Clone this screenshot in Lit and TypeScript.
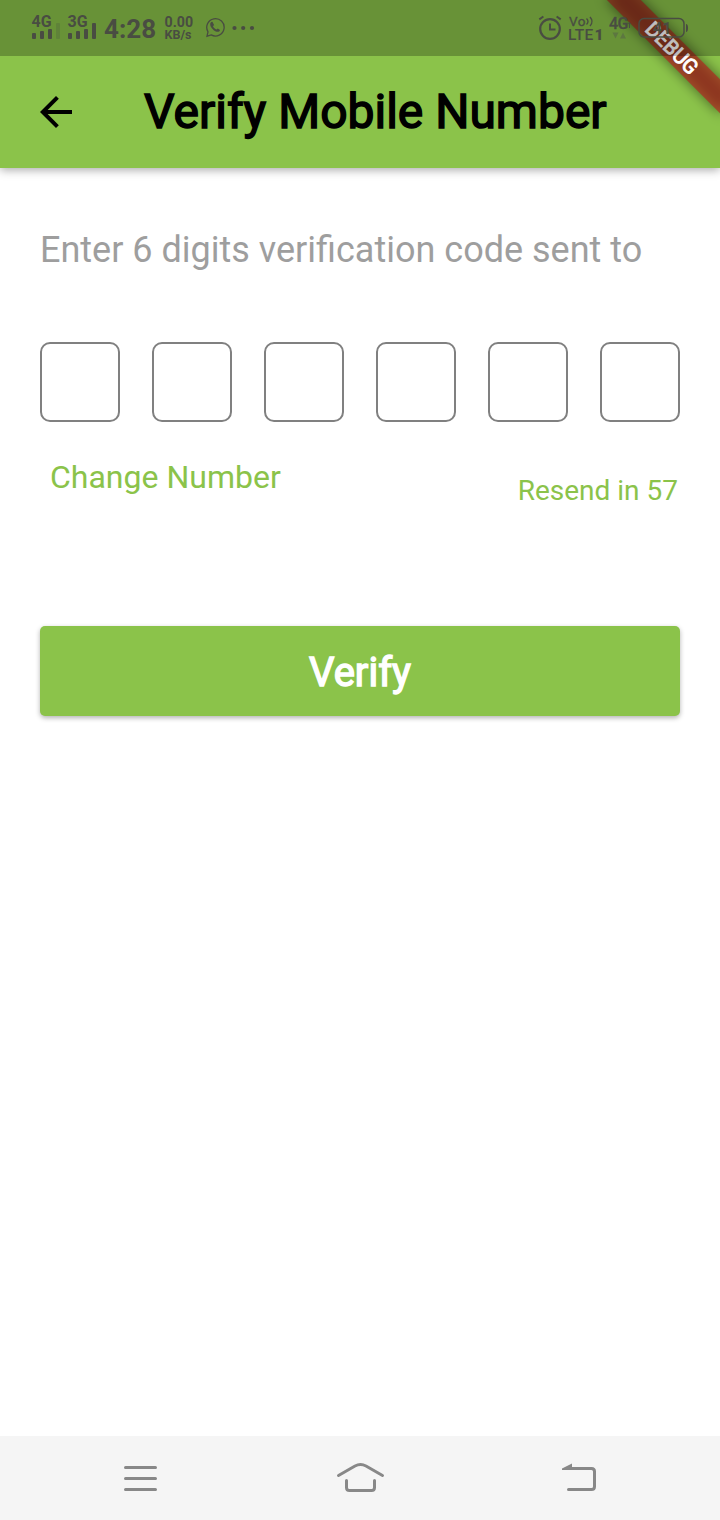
import { LitElement, html, css } from "lit";
import { customElement, state } from "lit/decorators.js";

@customElement("status-bar")
class StatusBar extends LitElement {
  static styles = css`
    :host { display: flex; justify-content: space-between; height: 56px; box-sizing: border-box;
      background: rgba(0, 0, 0, 0.25); color: #494c42; font-weight: 700; line-height: 1; }
    .side { display: flex; align-items: flex-start; }
    .left { padding-left: 31px; }
    .right { padding-right: 31px; }
    svg { display: block; fill: #494c42; }
    .signal { width: 36px; padding-top: 14px; }
    .signal svg { overflow: visible; }
    .signal .tag { padding-left: 0.5px; }
    .tag { font-size: 16px; height: 15px; line-height: 15px; }
    .time { font-size: 26px; width: 60px; padding: 16px 0 0 1px; }
    .rate { width: 40px; padding: 16px 0 0 0.5px; font-size: 14.2px; line-height: 13px; white-space: nowrap; }
    .unit { font-size: 12.5px; line-height: 12px; }
    .chat { padding-top: 17px; width: 27.5px; }
    .dots { padding-top: 25px; }
    .alarm { padding-top: 15px; width: 31px; }
    .volte { width: 40px; padding-top: 15px; font-size: 13.5px; line-height: 13px; white-space: nowrap; }
    .vo { font-weight: 400; display: flex; letter-spacing: 0.4px; -webkit-text-stroke: 0.3px #494c42; }
    .lte { font-size: 15.5px; line-height: 14px; letter-spacing: 0.3px; font-weight: 500; margin-left: -1px; }
    .lte b { font-weight: 900; margin-left: 1px; }
    .net { padding-top: 16px; width: 29px; }
    .net .tag { letter-spacing: -0.6px; display: flex; font-weight: 500; -webkit-text-stroke: 0.3px #494c42; }
    .battery { padding-top: 17px; }
  `;
  render() {
    return html`
      <div class="side left">
        <div class="signal"><div class="tag">4G</div>
          <svg width="30" height="17" viewBox="0 0 30 17"><rect x="1" y="4" width="4" height="6" rx="1"/><rect x="9" y="2" width="4" height="8" rx="1"/><rect x="17" y="0" width="4" height="10" rx="1"/><rect fill="#5f8239" x="25" y="-6" width="4" height="16" rx="1"/></svg>
        </div>
        <div class="signal"><div class="tag">3G</div>
          <svg width="30" height="17" viewBox="0 0 30 17"><rect x="1" y="4" width="4" height="6" rx="1"/><rect x="9" y="2" width="4" height="8" rx="1"/><rect x="17" y="0" width="4" height="10" rx="1"/><rect x="25" y="-6" width="4" height="16" rx="1"/></svg>
        </div>
        <div class="time">4:28</div>
        <div class="rate">0.00<div class="unit">KB/s</div></div>
        <div class="chat"><svg width="20" height="21" viewBox="0 0 20 21"><path fill="none" stroke="#494c42" stroke-width="1.3" d="M2 19.2 3 14.8A8.7 8.7 0 1 1 6.2 17.9Z"/><path d="M6.1 5.1 7.4 4.8 9.1 8 8 9.3C8.8 11 10 12 11.5 12.5L12.8 11.4 15 13C14.7 15.4 11.5 15.4 9 13.5 6.5 11.6 3.7 7.5 6.1 5.1Z"/></svg></div>
        <div class="dots"><svg width="23" height="6" viewBox="0 0 23 6"><circle cx="2.500" cy="3" r="2.100"/><circle cx="11.200" cy="3" r="2.100"/><circle cx="20" cy="3" r="2.100"/></svg></div>
      </div>
      <div class="side right">
        <div class="alarm"><svg width="24" height="26" viewBox="0 0 24 26"><g fill="none" stroke="#494c42"><circle cx="12" cy="14" r="9.800" stroke-width="2.200"/><path stroke-width="2" d="M12 8.500v6h5.500M1.300 4.400 5.400 1.500M18.600 1.500l4.100 2.900"/></g></svg></div>
        <div class="volte"><div class="vo">Vo<svg width="10" height="12" viewBox="0 0 10 12"><path fill="none" stroke="#494c42" stroke-width="1.400" d="M.5 3.500q3 3 0 6M4 2q4 4.500 0 9"/></svg></div><div class="lte">LTE<b>1</b></div></div>
        <div class="net"><div class="tag">4G<svg width="4" height="15" viewBox="0 0 4 15"><path d="M0 8 1.500 6 3 8H2v4H1V8z"/></svg></div><svg width="20" height="9" viewBox="0 0 20 9"><path fill="#5d7740" d="M3.500 1.500h6L6.500 7.500ZM11 7.500h6L14 1.500Z"/></svg></div>
        <div class="battery"><svg width="51" height="22" viewBox="0 0 51 22"><rect x="1" y="1.500" width="45" height="18.500" rx="5" fill="none" stroke="#494c42" stroke-width="1.500"/><path d="M48 7q2 0 2 4t-2 4z"/><text x="15" y="16.500" font-size="16">41</text></svg></div>
      </div>`;
  }
}

@customElement("debug-banner")
class DebugBanner extends LitElement {
  static styles = css`
    :host { position: absolute; top: 0; right: 0; z-index: 1; }
    svg { display: block; }
    text { font: 400 20.4px Roboto, sans-serif; stroke: #fff; stroke-width: 0.9px; }
  `;
  render() {
    return html`<svg width="160" height="160" viewBox="0 0 160 160">
      <defs><filter id="soft" x="-30%" y="-200%" width="160%" height="500%"><feGaussianBlur stdDeviation="6.500"/></filter></defs>
      <g transform="translate(160 0) rotate(45)">
        <rect x="-80" y="56" width="160" height="24" fill="#000" fill-opacity=".5" filter="url(#soft)"/>
        <rect x="-80" y="56" width="160" height="24" fill="#b71c1c" fill-opacity=".63"/>
        <text x="0" y="75" text-anchor="middle" fill="#fff">DEBUG</text>
      </g></svg>`;
  }
}

@customElement("app-root")
class AppRoot extends LitElement {
  @state() private seconds = 57;
  @state() private digits = ["", "", "", "", "", ""];

  static styles = css`
    :host { display: flex; flex-direction: column; position: relative; height: 1520px; width: 720px;
      overflow: hidden; background: #fff; font-family: Roboto, sans-serif; }
    .top { background: #8bc34a; box-shadow: 0 2px 9px rgba(0, 0, 0, 0.34); }
    status-bar { position: relative; z-index: 2; }
    header { display: flex; align-items: center; height: 112px; padding-left: 32px; }
    header svg { display: block; }
    h1 { margin: 0 0 0 64px; font-size: 48px; line-height: 56px; font-weight: 400; color: #000;
      -webkit-text-stroke: 1.5px #000; white-space: nowrap; }
    main { flex: 1; display: flex; flex-direction: column; padding: 61px 40px 0; }
    .hint { margin: 0; font-size: 36px; line-height: 42px; color: #9e9e9e; white-space: nowrap; }
    .code { display: flex; justify-content: space-between; margin-top: 71px; }
    .digit { box-sizing: border-box; width: 80px; height: 80px; border: 2px solid #808080; border-radius: 10px;
      display: grid; place-items: center; font-size: 36px; }
    .actions { display: flex; justify-content: space-between; margin-top: 36px; padding: 0 2px 0 10px; color: #8bc34a; }
    .change { font-size: 32px; line-height: 38px; }
    .resend { font-size: 28px; line-height: 34px; padding-top: 16px; }
    .verify { margin: 118px 0 0; height: 90px; padding: 3px 0 0; border: 0; border-radius: 5px; background: #8bc34a; color: #fff;
      font: 400 40px/46px Roboto, sans-serif; -webkit-text-stroke: 1.4px #fff;
      box-shadow: 0 2px 5px rgba(0, 0, 0, 0.3); }
    nav { display: flex; height: 84px; background: #f5f5f5; }
    nav svg { display: block; }
  `;

  render() {
    return html`
      <div class="top">
        <status-bar></status-bar>
        <header>
          <svg width="48" height="48" viewBox="0 0 24 24"><path d="M20 11H7.830l5.590-5.590L12 4l-8 8 8 8 1.410-1.410L7.830 13H20v-2z"/></svg>
          <h1>Verify Mobile Number</h1>
        </header>
      </div>
      <main>
        <p class="hint">Enter 6 digits verification code sent to</p>
        <div class="code">${this.digits.map((d) => html`<div class="digit">${d}</div>`)}</div>
        <div class="actions"><span class="change">Change Number</span><span class="resend">Resend in ${this.seconds}</span></div>
        <button class="verify">Verify</button>
      </main>
      <nav>
        <svg width="720" height="84" viewBox="0 0 720 84" fill="none" stroke="#888" stroke-width="3" stroke-linecap="round" stroke-linejoin="round">
          <path d="M125.500 31.500h30M125.500 42.500h30M125.500 53.500h30"/>
          <path d="M338.500 39.500 355 30q5.500-3 11 0l16.500 9.500M346.500 44.500v7q0 3 3 3h22q3 0 3-3v-7"/>
          <path d="M568.500 53.500h23q3 0 3-3v-15q0-3-3-3h-22"/><path stroke="none" fill="#888" d="M562 34v-1.500l10-5V34z"/>
        </svg>
      </nav>
      <debug-banner></debug-banner>`;
  }
}
